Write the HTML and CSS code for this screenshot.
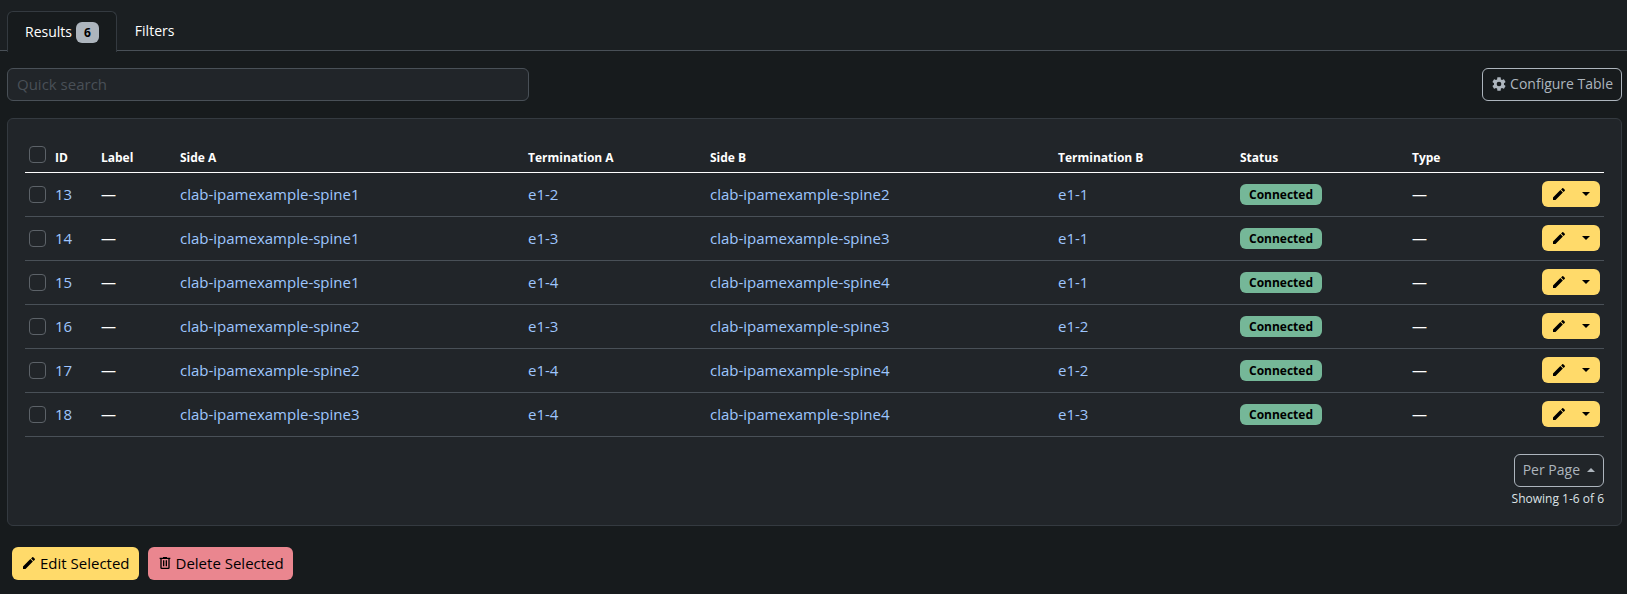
FILE: index.html
```
<!DOCTYPE html>
<html lang="en">
<head>
<meta charset="utf-8">
<meta name="viewport" content="width=device-width, initial-scale=1">
<title>Cables</title>
<link rel="stylesheet" href="styles.css">
</head>
<body>
<svg class="sprite" aria-hidden="true">
  <symbol id="pencil" viewBox="0 0 24 24"><path d="M20.71,7.04C21.1,6.65 21.1,6 20.71,5.63L18.37,3.29C18,2.9 17.35,2.9 16.96,3.29L15.12,5.12L18.87,8.87M3,17.25V21H6.75L17.81,9.93L14.06,6.18L3,17.25Z"/></symbol>
  <symbol id="trash" viewBox="0 0 24 24"><path d="M9,3V4H4V6H5V19A2,2 0 0,0 7,21H17A2,2 0 0,0 19,19V6H20V4H15V3H9M7,6H17V19H7V6M9,8V17H11V8H9M13,8V17H15V8H13Z"/></symbol>
  <symbol id="cog" viewBox="0 0 24 24"><path d="M12,15.5A3.5,3.5 0 0,1 8.5,12A3.5,3.5 0 0,1 12,8.5A3.5,3.5 0 0,1 15.5,12A3.5,3.5 0 0,1 12,15.5M19.43,12.97C19.47,12.65 19.5,12.33 19.5,12C19.5,11.67 19.47,11.34 19.43,11L21.54,9.37C21.73,9.22 21.78,8.95 21.66,8.73L19.66,5.27C19.54,5.05 19.27,4.96 19.05,5.05L16.56,6.05C16.04,5.66 15.5,5.32 14.87,5.07L14.5,2.42C14.46,2.18 14.25,2 14,2H10C9.75,2 9.54,2.18 9.5,2.42L9.13,5.07C8.5,5.32 7.96,5.66 7.44,6.05L4.95,5.05C4.73,4.96 4.46,5.05 4.34,5.27L2.34,8.73C2.21,8.95 2.27,9.22 2.46,9.37L4.57,11C4.53,11.34 4.5,11.67 4.5,12C4.5,12.33 4.53,12.65 4.57,12.97L2.46,14.63C2.27,14.78 2.21,15.05 2.34,15.27L4.34,18.73C4.46,18.95 4.73,19.03 4.95,18.95L7.44,17.94C7.96,18.34 8.5,18.68 9.13,18.93L9.5,21.58C9.54,21.82 9.75,22 10,22H14C14.25,22 14.46,21.82 14.5,21.58L14.87,18.93C15.5,18.67 16.04,18.34 16.56,17.94L19.05,18.95C19.27,19.03 19.54,18.95 19.66,18.73L21.66,15.27C21.78,15.05 21.73,14.78 21.54,14.63L19.43,12.97Z"/></symbol>
</svg>

<nav class="tabs" aria-label="List views">
  <a class="tab tab-active" href="#results">Results <span class="badge badge-count">6</span></a>
  <a class="tab" href="#filters">Filters</a>
</nav>

<main class="content" id="results">
  <div class="toolbar">
    <input class="search" type="text" placeholder="Quick search" aria-label="Quick search">
    <button class="btn btn-outline" type="button"><svg class="icon"><use href="#cog"/></svg>Configure Table</button>
  </div>

  <section class="card">
    <table class="table">
      <colgroup><col class="col-check"><col class="col-id"><col class="col-label"><col class="col-side"><col class="col-term"><col class="col-side"><col class="col-term"><col class="col-status"><col class="col-type"></colgroup>
      <thead>
        <tr><th><input class="check" type="checkbox" aria-label="Select all"></th><th>ID</th><th>Label</th><th>Side A</th><th>Termination A</th><th>Side B</th><th>Termination B</th><th>Status</th><th>Type</th></tr>
      </thead>
      <tbody id="rows"></tbody>
    </table>
    <div class="pager">
      <button class="btn btn-outline" type="button">Per Page <span class="caret caret-up"></span></button>
      <small class="showing">Showing 1-6 of 6</small>
    </div>
  </section>

  <div class="actions">
    <button class="btn btn-warning" type="button"><svg class="icon"><use href="#pencil"/></svg>Edit Selected</button>
    <button class="btn btn-danger" type="button"><svg class="icon"><use href="#trash"/></svg>Delete Selected</button>
  </div>
</main>
<script src="rows.js"></script>
</body>
</html>
```
FILE: styles.css
```
* { box-sizing: border-box; }

body {
  margin: 0;
  min-height: 100vh;
  background: #171b1d;
  color: #fff;
  font-family: "Segoe UI", "Open Sans", "Noto Sans", sans-serif;
  font-size: 15px;
  line-height: 24px;
}

a { color: #9ec5fe; text-decoration: none; }
button, input { font: inherit; }

.sprite { position: absolute; width: 0; height: 0; }
.icon { width: 16px; height: 16px; fill: currentColor; flex: none; }

.tabs {
  display: flex;
  align-items: flex-start;
  height: 51px;
  padding: 11px 7px 0;
  background: #1b1f22;
  border-bottom: 1px solid #495057;
  font-size: 14px;
}
.tab {
  display: flex;
  align-items: center;
  gap: 4px;
  height: 38px;
  padding: 0 17px;
  border: 1px solid transparent;
  border-bottom: 0;
  border-radius: 6px 6px 0 0;
  color: #fff;
}
.tab-active {
  height: 41px;
  background: #171b1d;
  border-color: #343a40;
}

.badge {
  display: block;
  width: fit-content;
  padding: 0 9px;
  border-radius: 6px;
  color: #000;
  font-size: 12px;
  font-weight: 700;
  line-height: 21px;
}
.badge-count { padding: 0 8px; background: #adb5bd; }
.badge-green { background: #75b798; }

.content { padding: 17px 5px 14px 7px; }

.toolbar {
  display: flex;
  justify-content: space-between;
  margin-bottom: 17px;
}
.search {
  width: 32.3%;
  height: 33px;
  padding: 0 9px 2px;
  border: 1px solid #495057;
  border-radius: 6px;
  background: #212529;
  color: #fff;
}
.search::placeholder { color: #495057; opacity: 1; }

.btn {
  display: inline-flex;
  align-items: center;
  gap: 3px;
  height: 33px;
  padding: 0 8px 1px;
  border: 1px solid transparent;
  border-radius: 6px;
  color: #000;
  white-space: nowrap;
}
.btn-outline {
  background: transparent;
  border-color: #adb5bd;
  color: #adb5bd;
  font-size: 14px;
}
.btn-warning { background: #ffda6a; }
.btn-danger { background: #ea868f; }

.card {
  padding: 17px 17px 16px;
  border: 1px solid #343a40;
  border-radius: 6px;
  background: #212529;
}

.table {
  width: 100%;
  table-layout: fixed;
  border-collapse: collapse;
}
.col-check { width: 26px; }
.col-id { width: 46px; }
.col-label { width: 79px; }
.col-side { width: 348px; }
.col-term { width: 182px; }
.col-status { width: 172px; }
.col-type { width: 196px; }
.table th, .table td { padding: 0 4px; text-align: left; }
.table th {
  height: 36px;
  padding-bottom: 4px;
  border-bottom: 1px solid #fff;
  font-size: 12px;
  line-height: 20px;
  vertical-align: bottom;
}
.table td {
  height: 44px;
  border-bottom: 1px solid #495057;
  vertical-align: middle;
}
.check {
  appearance: none;
  display: block;
  width: 17px;
  height: 17px;
  margin: 0;
  border: 1px solid #5c6268;
  border-radius: 4px;
  background: transparent;
}
th .check { margin-bottom: 5px; }

.type-cell { display: flex; align-items: center; justify-content: space-between; }
.btn-group { display: flex; }
.btn-small {
  display: flex;
  align-items: center;
  justify-content: center;
  height: 26px;
  padding: 0;
  border: 0;
  background: #ffda6a;
  color: #000;
}
.btn-edit { width: 34px; border-radius: 6px 0 0 6px; }
.btn-menu { width: 24px; padding-right: 4px; border-radius: 0 6px 6px 0; }

.caret {
  border: 4px solid transparent;
  border-top-color: currentColor;
  border-bottom: 0;
}
.caret-up {
  margin-left: 4px;
  border-top: 0;
  border-bottom: 4px solid currentColor;
}

.pager {
  display: flex;
  flex-direction: column;
  align-items: flex-end;
  gap: 2px;
  margin-top: 17px;
}
.showing { color: #dee2e6; font-size: 12px; line-height: 20px; }

.actions { display: flex; gap: 9px; padding: 21px 5px 0; }
```
FILE: rows.js
```
const cables = [
  [13, 1, "e1-2", 2, "e1-1"],
  [14, 1, "e1-3", 3, "e1-1"],
  [15, 1, "e1-4", 4, "e1-1"],
  [16, 2, "e1-3", 3, "e1-2"],
  [17, 2, "e1-4", 4, "e1-2"],
  [18, 3, "e1-4", 4, "e1-3"]
];
const link = (text) => `<a href="#${text}">${text}</a>`;
document.getElementById("rows").innerHTML = cables.map(([id, a, portA, b, portB]) => `
<tr>
  <td><input class="check" type="checkbox" aria-label="Select ${id}"></td>
  <td>${link(id)}</td>
  <td>—</td>
  <td>${link("clab-ipamexample-spine" + a)}</td>
  <td>${link(portA)}</td>
  <td>${link("clab-ipamexample-spine" + b)}</td>
  <td>${link(portB)}</td>
  <td><span class="badge badge-green">Connected</span></td>
  <td><div class="type-cell"><span>—</span><div class="btn-group">
    <button class="btn-small btn-edit" type="button" aria-label="Edit ${id}"><svg class="icon"><use href="#pencil"/></svg></button>
    <button class="btn-small btn-menu" type="button" aria-label="More actions for ${id}"><span class="caret"></span></button>
  </div></div></td>
</tr>`).join("");
```
